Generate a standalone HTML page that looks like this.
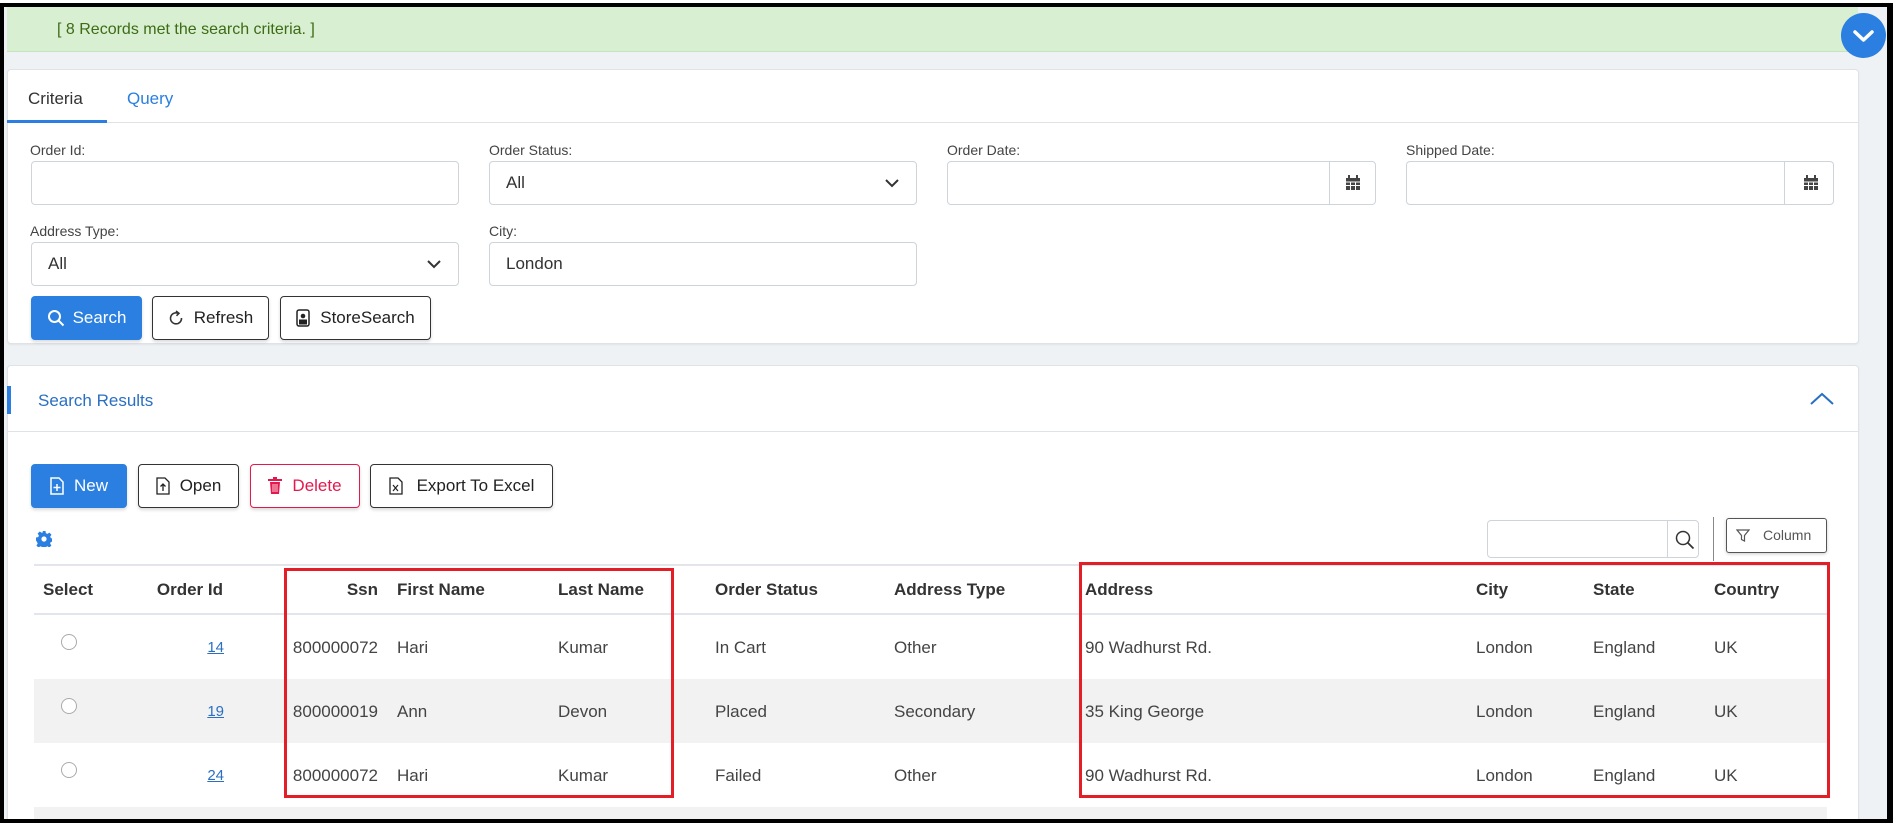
<!DOCTYPE html>
<html><head><meta charset="utf-8"><style>
*{box-sizing:border-box;margin:0;padding:0}
body{width:1893px;height:823px;overflow:hidden;background:#fff;font-family:"Liberation Sans",sans-serif;position:relative}
.frame{position:absolute;left:0;top:3px;width:1893px;height:820px;border:4px solid #000;border-right-width:6px;background:#eef2f5;overflow:hidden}
.a{position:absolute;white-space:nowrap}
.wrap{position:absolute;left:0;top:-4px;width:1893px;height:830px}
.card{position:absolute;background:#fff;border:1px solid #dfe3e8;border-radius:4px;box-shadow:0 1px 2px rgba(0,0,0,.06)}
.lbl{position:absolute;font-size:14px;color:#444;white-space:nowrap}
.inp{position:absolute;height:44px;border:1px solid #ced4da;border-radius:4px;background:#fff;font-size:17px;color:#333;padding-left:16px;line-height:42px;white-space:nowrap}
.btn{position:absolute;height:44px;border:1px solid #333;border-radius:4px;background:#fff;font-size:17px;color:#222;display:flex;align-items:center;justify-content:center;gap:10px;box-shadow:0 2px 3px rgba(0,0,0,.15);white-space:nowrap}
.blue{background:#2a7fe0;border-color:#2a7fe0;color:#fff}
.th{position:absolute;top:577px;font-size:17px;font-weight:bold;color:#333;white-space:nowrap}
.td{position:absolute;font-size:17px;color:#444;white-space:nowrap}
.red{position:absolute;border:3px solid #e41e26}
</style></head><body>
<div class="frame">
<!-- green bar -->
<div class="a" style="left:3px;top:0px;width:1851px;height:45px;background:#d8efd1;border-bottom:1px solid #c7e3bd"></div>
<div class="a" style="left:53px;top:14px;font-size:16px;color:#3d6b16">[ 8 Records met the search criteria. ]</div>
<div class="a" style="left:1837px;top:6px;width:45px;height:45px;border-radius:50%;background:#2a7fe0"><svg width="45" height="45"><path d="M14 19l8.5 8 8.5-8" stroke="#fff" stroke-width="3.5" fill="none" stroke-linecap="round" stroke-linejoin="round"/></svg></div>

<div class="wrap">
<!-- criteria card -->
<div class="card" style="left:3px;top:66px;width:1852px;height:275px"></div>
<div class="a" style="left:3px;top:119px;width:1852px;height:1px;background:#dfe3e8"></div>
<div class="a" style="left:3px;top:117px;width:100px;height:3px;background:#2a7fe0"></div>
<div class="a" style="left:24px;top:86px;font-size:17px;color:#333">Criteria</div>
<div class="a" style="left:123px;top:86px;font-size:17px;color:#2a7fe0">Query</div>

<div class="lbl" style="left:26px;top:139px">Order Id:</div>
<div class="inp" style="left:27px;top:158px;width:428px"></div>
<div class="lbl" style="left:485px;top:139px">Order Status:</div>
<div class="inp" style="left:485px;top:158px;width:428px">All<svg class="a" style="right:16px;top:15px" width="16" height="12"><path d="M2 3l6 6 6-6" stroke="#333" stroke-width="2" fill="none"/></svg></div>
<div class="lbl" style="left:943px;top:139px">Order Date:</div>
<div class="inp" style="left:943px;top:158px;width:429px"><div class="a" style="left:381px;top:-1px;width:1px;height:44px;background:#ced4da"></div><svg class="a" style="right:14px;top:13px" width="16" height="16"><rect x="1" y="3" width="14" height="12" fill="#444"/><rect x="3" y="0" width="2" height="4" fill="#444"/><rect x="11" y="0" width="2" height="4" fill="#444"/><path d="M1 7h14M1 10.5h14M5.5 7v8M10.5 7v8" stroke="#fff" stroke-width="1"/></svg></div>
<div class="lbl" style="left:1402px;top:139px">Shipped Date:</div>
<div class="inp" style="left:1402px;top:158px;width:428px"><div class="a" style="left:377px;top:-1px;width:1px;height:44px;background:#ced4da"></div><svg class="a" style="right:14px;top:13px" width="16" height="16"><rect x="1" y="3" width="14" height="12" fill="#444"/><rect x="3" y="0" width="2" height="4" fill="#444"/><rect x="11" y="0" width="2" height="4" fill="#444"/><path d="M1 7h14M1 10.5h14M5.5 7v8M10.5 7v8" stroke="#fff" stroke-width="1"/></svg></div>

<div class="lbl" style="left:26px;top:220px">Address Type:</div>
<div class="inp" style="left:27px;top:239px;width:428px">All<svg class="a" style="right:16px;top:15px" width="16" height="12"><path d="M2 3l6 6 6-6" stroke="#333" stroke-width="2" fill="none"/></svg></div>
<div class="lbl" style="left:485px;top:220px">City:</div>
<div class="inp" style="left:485px;top:239px;width:428px">London</div>

<div class="btn blue" style="left:27px;top:293px;width:111px;gap:8px"><svg width="18" height="18"><circle cx="7.5" cy="7.5" r="5.5" stroke="#fff" stroke-width="2" fill="none"/><path d="M11.5 11.5l5 5" stroke="#fff" stroke-width="2"/></svg>Search</div>
<div class="btn" style="left:148px;top:293px;width:117px"><svg width="16" height="16"><path d="M10 3.2A5.5 5.5 0 1 0 13.5 8" stroke="#333" stroke-width="1.6" fill="none"/><path d="M8 1l3 2.3-2.5 2.5" stroke="#333" stroke-width="1.5" fill="none"/></svg>Refresh</div>
<div class="btn" style="left:276px;top:293px;width:151px"><svg width="14" height="18"><rect x="1" y="1" width="12" height="16" rx="2" fill="none" stroke="#222" stroke-width="1.5"/><circle cx="7" cy="7" r="2.3" fill="#222"/><rect x="3" y="10.5" width="8" height="5" fill="#222"/></svg>StoreSearch</div>

<!-- results card -->
<div class="card" style="left:3px;top:362px;width:1852px;height:470px"></div>
<div class="a" style="left:3px;top:383px;width:4px;height:28px;background:#2a7fe0"></div>
<div class="a" style="left:34px;top:388px;font-size:17px;color:#2a6fc2">Search Results</div>
<svg class="a" style="left:1805px;top:388px" width="26" height="16"><path d="M2 13l11-10 11 10" stroke="#2a6fc2" stroke-width="2" fill="none"/></svg>
<div class="a" style="left:3px;top:428px;width:1852px;height:1px;background:#dfe3e8"></div>

<div class="btn blue" style="left:27px;top:461px;width:96px"><svg width="14" height="18"><path d="M1 1h8l4 4v12H1z" fill="none" stroke="#fff" stroke-width="1.5"/><path d="M7 7v7M3.5 10.5h7" stroke="#fff" stroke-width="1.5"/></svg>New</div>
<div class="btn" style="left:134px;top:461px;width:101px"><svg width="14" height="18"><path d="M1 1h8l4 4v12H1z" fill="none" stroke="#222" stroke-width="1.3"/><path d="M7 14V7M4.5 9.5L7 7l2.5 2.5" stroke="#222" stroke-width="1.3" fill="none"/></svg>Open</div>
<div class="btn" style="left:246px;top:461px;width:110px;border-color:#e4184c;color:#e4184c"><svg width="14" height="18"><path d="M0 3h14M5 1h4" stroke="#e4184c" stroke-width="2"/><path d="M2 5h10l-1 12H3z" fill="#e4184c"/><path d="M5 7v8M7 7v8M9 7v8" stroke="#fff" stroke-width="0.8"/></svg>Delete</div>
<div class="btn" style="left:366px;top:461px;width:183px;gap:14px"><svg width="14" height="18"><path d="M1 1h8l4 4v12H1z" fill="none" stroke="#222" stroke-width="1.3"/><path d="M4 8l5 6M9 8l-5 6" stroke="#222" stroke-width="1.2"/></svg>Export To Excel</div>

<svg class="a" style="left:32px;top:528px" width="16" height="16" viewBox="0 0 16 16"><path fill="#2a7fe0" d="M6.5 0h3l.4 2.2 1.6.7 1.9-1.3 2.1 2.1-1.3 1.9.7 1.6 2.1.4v3l-2.2.4-.7 1.6 1.3 1.9-2.1 2.1-1.9-1.3-1.6.7-.4 2.2h-3l-.4-2.2-1.6-.7-1.9 1.3-2.1-2.1 1.3-1.9-.7-1.6L0 9.5v-3l2.2-.4.7-1.6-1.3-1.9 2.1-2.1 1.9 1.3 1.6-.7z"/><circle cx="8" cy="8" r="2.6" fill="#fff"/></svg>

<div class="a" style="left:1483px;top:517px;width:212px;height:38px;border:1px solid #ced4da;border-radius:4px"><div class="a" style="left:179px;top:0;width:1px;height:36px;background:#ced4da"></div><svg class="a" style="left:186px;top:8px" width="22" height="22"><circle cx="9" cy="9" r="6.5" stroke="#333" stroke-width="1.5" fill="none"/><path d="M13.5 13.5l6 6" stroke="#333" stroke-width="1.8"/></svg></div>
<div class="a" style="left:1709px;top:514px;width:1px;height:44px;background:#888"></div>
<div class="a" style="left:1722px;top:515px;width:101px;height:35px;border:1px solid #555;border-radius:3px;font-size:14px;color:#555;box-shadow:0 1px 3px rgba(0,0,0,.2)"><svg class="a" style="left:9px;top:10px" width="14" height="14"><path d="M1 1h12L8.5 6.5V12l-3-1.5V6.5z" stroke="#555" stroke-width="1.2" fill="none"/></svg><span class="a" style="left:36px;top:8px">Column</span></div>

<!-- table -->
<div class="a" style="left:30px;top:561px;width:1793px;height:2px;background:#e2e5ea"></div>
<div class="a" style="left:30px;top:610px;width:1793px;height:2px;background:#e2e5ea"></div>
<div class="a" style="left:30px;top:676px;width:1793px;height:64px;background:#f2f2f2"></div>
<div class="a" style="left:30px;top:804px;width:1793px;height:30px;background:#f2f2f2"></div>

<div class="th" style="left:39px">Select</div>
<div class="th" style="left:150px;width:69px;text-align:right">Order Id</div>
<div class="th" style="left:300px;width:74px;text-align:right">Ssn</div>
<div class="th" style="left:393px">First Name</div>
<div class="th" style="left:554px">Last Name</div>
<div class="th" style="left:711px">Order Status</div>
<div class="th" style="left:890px">Address Type</div>
<div class="th" style="left:1081px">Address</div>
<div class="th" style="left:1472px">City</div>
<div class="th" style="left:1589px">State</div>
<div class="th" style="left:1710px">Country</div>

<div class="a" style="left:57px;top:631px;width:16px;height:16px;border:1px solid #aaa;border-radius:50%;background:#fff"></div>
<div class="td" style="left:150px;top:636px;width:70px;text-align:right;font-size:15px;color:#2a6fc2;text-decoration:underline">14</div>
<div class="td" style="left:234px;top:635px;width:140px;text-align:right">800000072</div>
<div class="td" style="left:393px;top:635px">Hari</div>
<div class="td" style="left:554px;top:635px">Kumar</div>
<div class="td" style="left:711px;top:635px">In Cart</div>
<div class="td" style="left:890px;top:635px">Other</div>
<div class="td" style="left:1081px;top:635px">90 Wadhurst Rd.</div>
<div class="td" style="left:1472px;top:635px">London</div>
<div class="td" style="left:1589px;top:635px">England</div>
<div class="td" style="left:1710px;top:635px">UK</div>

<div class="a" style="left:57px;top:695px;width:16px;height:16px;border:1px solid #aaa;border-radius:50%;background:#fff"></div>
<div class="td" style="left:150px;top:700px;width:70px;text-align:right;font-size:15px;color:#2a6fc2;text-decoration:underline">19</div>
<div class="td" style="left:234px;top:699px;width:140px;text-align:right">800000019</div>
<div class="td" style="left:393px;top:699px">Ann</div>
<div class="td" style="left:554px;top:699px">Devon</div>
<div class="td" style="left:711px;top:699px">Placed</div>
<div class="td" style="left:890px;top:699px">Secondary</div>
<div class="td" style="left:1081px;top:699px">35 King George</div>
<div class="td" style="left:1472px;top:699px">London</div>
<div class="td" style="left:1589px;top:699px">England</div>
<div class="td" style="left:1710px;top:699px">UK</div>

<div class="a" style="left:57px;top:759px;width:16px;height:16px;border:1px solid #aaa;border-radius:50%;background:#fff"></div>
<div class="td" style="left:150px;top:764px;width:70px;text-align:right;font-size:15px;color:#2a6fc2;text-decoration:underline">24</div>
<div class="td" style="left:234px;top:763px;width:140px;text-align:right">800000072</div>
<div class="td" style="left:393px;top:763px">Hari</div>
<div class="td" style="left:554px;top:763px">Kumar</div>
<div class="td" style="left:711px;top:763px">Failed</div>
<div class="td" style="left:890px;top:763px">Other</div>
<div class="td" style="left:1081px;top:763px">90 Wadhurst Rd.</div>
<div class="td" style="left:1472px;top:763px">London</div>
<div class="td" style="left:1589px;top:763px">England</div>
<div class="td" style="left:1710px;top:763px">UK</div>

<div class="red" style="left:280px;top:565px;width:390px;height:230px"></div>
<div class="red" style="left:1075px;top:559px;width:751px;height:236px"></div>
</div>
</div>
</body></html>
